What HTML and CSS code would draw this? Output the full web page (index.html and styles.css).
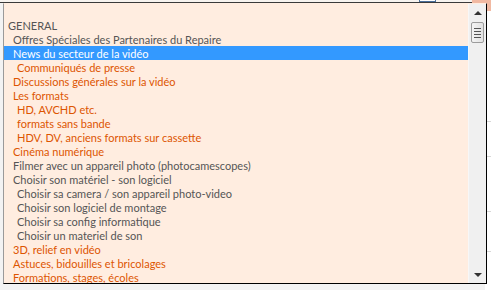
FILE: index.html
```html
<!DOCTYPE html>
<html lang="fr">
<head>
<meta charset="utf-8">
<title>Forum</title>
<link rel="stylesheet" href="styles.css">
</head>
<body>
<div class="page">
  <div class="topfield"><span class="focusbox"></span></div>
  <div class="corner"></div>
  <div class="side-right">
    <span class="line l1"></span><span class="line l2"></span><span class="line l3"></span><span class="line l4"></span>
  </div>
  <div class="dropdown">
    <ul class="options">
      <li class="opt"></li>
      <li class="opt grey lvl0">GENERAL</li>
      <li class="opt grey lvl1">Offres Spéciales des Partenaires du Repaire</li>
      <li class="opt selected lvl1">News du secteur de la vidéo</li>
      <li class="opt orange lvl2">Communiqués de presse</li>
      <li class="opt orange lvl1">Discussions générales sur la vidéo</li>
      <li class="opt orange lvl1">Les formats</li>
      <li class="opt orange lvl2">HD, AVCHD etc.</li>
      <li class="opt orange lvl2">formats sans bande</li>
      <li class="opt orange lvl2">HDV, DV, anciens formats sur cassette</li>
      <li class="opt orange lvl1">Cinéma numérique</li>
      <li class="opt grey lvl1">Filmer avec un appareil photo (photocamescopes)</li>
      <li class="opt grey lvl1">Choisir son matériel - son logiciel</li>
      <li class="opt grey lvl2">Choisir sa camera / son appareil photo-video</li>
      <li class="opt grey lvl2">Choisir son logiciel de montage</li>
      <li class="opt grey lvl2">Choisir sa config informatique</li>
      <li class="opt grey lvl2">Choisir un materiel de son</li>
      <li class="opt orange lvl1">3D, relief en vidéo</li>
      <li class="opt orange lvl1">Astuces, bidouilles et bricolages</li>
      <li class="opt orange lvl1">Formations, stages, écoles</li>
    </ul>
    <div class="scrollbar">
      <span class="arrow up"></span>
      <span class="thumb"><span class="grip"></span><span class="grip"></span><span class="grip"></span><span class="grip"></span></span>
      <span class="track"></span>
      <span class="arrow down"></span>
    </div>
  </div>
</div>
</body>
</html>
```

FILE: styles.css
```css
html, body {
  margin: 0;
  padding: 0;
}
body {
  width: 491px;
  height: 290px;
  overflow: hidden;
  background: #ffffff;
  font-family: Lato, "Liberation Sans", sans-serif;
}
.page {
  position: relative;
  width: 491px;
  height: 290px;
  background: #f3f3f3;
}
.topfield {
  height: 2px;
  width: 472px;
  background: #f7f3ef;
  border-bottom: 1px solid #3a3a3a;
  position: relative;
}
.focusbox {
  position: absolute;
  left: 419px;
  top: -1px;
  width: 15px;
  height: 2px;
  border: 1px solid #4a6e9a;
  border-top: none;
  background: #fff;
}
.corner {
  position: absolute;
  right: 0;
  top: 0;
  width: 19px;
  height: 11px;
  background: #f1b9a2;
}
.side-right {
  position: absolute;
  right: 0;
  top: 11px;
  width: 6px;
  height: 279px;
  background: #ffffff;
}
.line {
  position: absolute;
  left: 0;
  width: 6px;
  height: 1px;
  background: #d8d8d8;
}
.l1 { top: 110px; }
.l2 { top: 145px; }
.l3 { top: 200px; }
.l4 { top: 240px; }
.dropdown {
  position: absolute;
  left: 3px;
  top: 3px;
  width: 482px;
  height: 279px;
  display: flex;
  background: #ffede0;
  border-left: 1px solid #9a9a9a;
  border-right: 1px solid #000;
  border-bottom: 1px solid #000;
  border-top: 1px solid #ffede0;
}
.options {
  list-style: none;
  margin: 0;
  padding: 0;
  flex: 1;
  overflow: hidden;
}
.opt {
  height: 14px;
  line-height: 15px;
  font-size: 11px;
  white-space: nowrap;
  color: #555;
}
.lvl0 { padding-left: 4px; color: #606060; }
.lvl1 { padding-left: 9px; }
.lvl2 { padding-left: 13px; }
.grey { color: #555555; }
.orange { color: #dd5500; }
.selected {
  background: #3399ff;
  color: #ffffff;
}
.scrollbar {
  width: 17px;
  display: flex;
  flex-direction: column;
  align-items: center;
  background: #f0f0f0;
  border-left: 1px solid #f7f7f7;
}
.arrow {
  width: 0;
  height: 0;
  border-left: 4px solid transparent;
  border-right: 4px solid transparent;
}
.up {
  margin-top: 7px;
  border-bottom: 4px solid #333;
}
.down {
  margin-bottom: 6px;
  border-top: 4px solid #333;
}
.thumb {
  margin-top: 7px;
  width: 13px;
  height: 21px;
  box-sizing: border-box;
  border: 1px solid #9c9c9c;
  border-radius: 2px;
  background: linear-gradient(to right, #f4f4f4, #e2e2e2);
  display: flex;
  flex-direction: column;
  justify-content: center;
  align-items: center;
  gap: 2px;
}
.grip {
  width: 7px;
  height: 1px;
  background: #555;
}
.track {
  flex: 1;
}
```
